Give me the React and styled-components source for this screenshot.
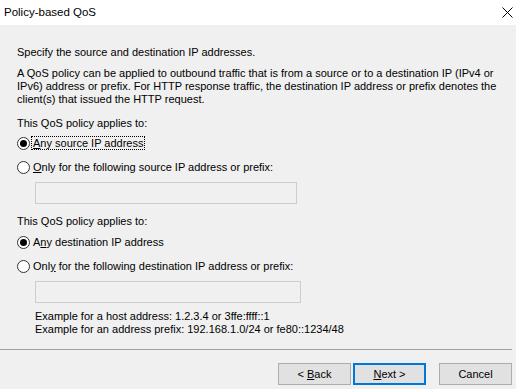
import styled, { createGlobalStyle } from 'styled-components';

const GlobalStyle = createGlobalStyle`
  * { box-sizing: border-box; }
  body {
    margin: 0;
    background: #f0f0f0;
  }
`;

const Window = styled.div`
  width: 516px;
  height: 389px;
  display: flex;
  flex-direction: column;
  background: #f0f0f0;
  color: #000;
  font-family: "Liberation Sans", Arial, sans-serif;
  font-size: 11px;
  overflow: hidden;
`;

const TitleBar = styled.div`
  height: 25px;
  flex: none;
  background: #fff;
  display: flex;
  align-items: center;
  justify-content: space-between;
  padding: 0 3px 2px 4px;
`;

const Title = styled.span`
  font-size: 11.5px;
`;

const CloseButton = styled.span`
  display: flex;
  margin-top: 2px;
`;

const Body = styled.div`
  flex: 1;
  display: flex;
  flex-direction: column;
`;

const Content = styled.div`
  flex: 1;
  padding: 21px 0 0 17px;
  display: flex;
  flex-direction: column;
`;

const Text = styled.div`
  line-height: 13px;
  white-space: nowrap;
  margin-top: ${p => p.$mt || 0}px;
  margin-left: ${p => p.$ml || 0}px;
`;

const RadioRow = styled.div`
  display: flex;
  align-items: center;
  height: 18px;
  margin-top: ${p => p.$mt || 0}px;
`;

const RadioCircle = styled.span`
  width: 13px;
  height: 13px;
  flex: none;
  border-radius: 50%;
  border: 1px solid #333;
  background: #fff;
  position: relative;
  margin-right: 2px;

  &::after {
    content: '';
    display: ${p => (p.$checked ? 'block' : 'none')};
    position: absolute;
    left: 2px;
    top: 2px;
    width: 7px;
    height: 7px;
    border-radius: 50%;
    background: #000;
  }
`;

const RadioLabel = styled.span`
  line-height: 12px;
  padding: 0 1px;
  border: 1px dotted ${p => (p.$focused ? '#000' : 'transparent')};
  margin-left: -1px;
`;

const AddressInput = styled.div`
  width: ${p => p.$w}px;
  height: 22px;
  margin: 6px 0 0 18px;
  border: 1px solid #cccccc;
  background: #f0f0f0;
`;

const Separator = styled.div`
  height: 1px;
  background: #a0a0a0;
  margin: 0 4px 0 0;
`;

const Footer = styled.div`
  display: flex;
  justify-content: flex-end;
  padding: 13px 4px 4px 0;
`;

const Button = styled.div`
  width: 73px;
  height: 22px;
  display: flex;
  align-items: center;
  justify-content: center;
  background: #e1e1e1;
  border: ${p => (p.$default ? '2px solid #0078d7' : '1px solid #adadad')};
  margin-left: ${p => p.$ml || 0}px;
`;

function Radio({ checked, focused, children, mt }) {
  return (
    <RadioRow $mt={mt}>
      <RadioCircle $checked={checked} />
      <RadioLabel $focused={focused}>{children}</RadioLabel>
    </RadioRow>
  );
}

export default function App() {
  return (
    <Window>
      <GlobalStyle />
      <TitleBar>
        <Title>Policy-based QoS</Title>
        <CloseButton>
          <svg width="11" height="11" viewBox="0 0 11 11">
            <path d="M0.5 0.5 L10.5 10.5 M10.5 0.5 L0.5 10.5" stroke="#000" strokeWidth="1" />
          </svg>
        </CloseButton>
      </TitleBar>
      <Body>
        <Content>
          <Text>Specify the source and destination IP addresses.</Text>
          <Text $mt={8}>
            A QoS policy can be applied to outbound traffic that is from a source or to a destination IP (IPv4 or
            <br />
            IPv6) address or prefix. For HTTP response traffic, the destination IP address or prefix denotes the
            <br />
            client(s) that issued the HTTP request.
          </Text>
          <Text $mt={11}>This QoS policy applies to:</Text>
          <Radio checked focused mt={4}>
            <u>A</u>ny source IP address
          </Radio>
          <Radio mt={6}>
            <u>O</u>nly for the following source IP address or prefix:
          </Radio>
          <AddressInput $w={262} />
          <Text $mt={11}>This QoS policy applies to:</Text>
          <Radio checked mt={5}>
            A<u>n</u>y destination IP address
          </Radio>
          <Radio mt={6}>
            Onl<u>y</u> for the following destination IP address or prefix:
          </Radio>
          <AddressInput $w={266} />
          <Text $mt={7} $ml={18}>
            Example for a host address: 1.2.3.4 or 3ffe:ffff::1
            <br />
            Example for an address prefix: 192.168.1.0/24 or fe80::1234/48
          </Text>
        </Content>
        <Separator />
        <Footer>
          <Button>
            <span>&lt; <u>B</u>ack</span>
          </Button>
          <Button $default $ml={2}>
            <span><u>N</u>ext &gt;</span>
          </Button>
          <Button $ml={13}>Cancel</Button>
        </Footer>
      </Body>
    </Window>
  );
}
